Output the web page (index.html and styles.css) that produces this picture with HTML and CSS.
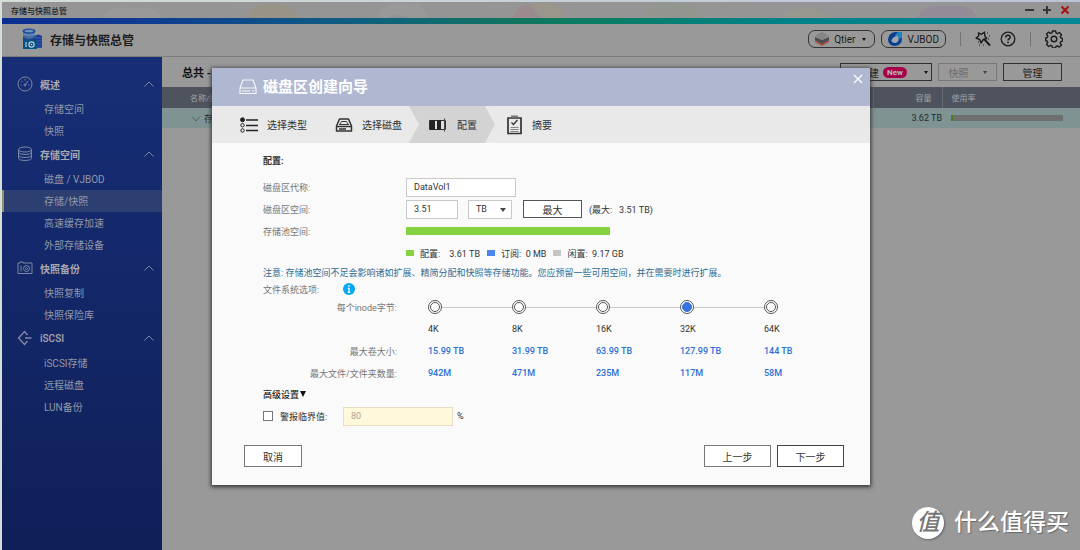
FILE: index.html
```html
<!DOCTYPE html>
<html lang="zh-CN">
<head>
<meta charset="utf-8">
<title>存储与快照总管</title>
<link rel="stylesheet" href="styles.css">
</head>
<body>
<div class="window">
  <div class="titlebar">
    <span class="titlebar-name">存储与快照总管</span>
    <svg class="deco" viewBox="0 0 1078 16" preserveAspectRatio="none" aria-hidden="true">
      <path d="M245 16q6-13 16-14h17q13 1 18 14z" fill="#9c927f"/>
      <path d="M101 16q4-9 14-10h30q11 1 14 10z" fill="#9d9d9d"/>
      <path d="M376 16q4-13 15-14h20q12 1 15 14" fill="#9d9d9d"/>
      <path d="M385 16q11-7 22 0" fill="#8e949b"/>
      <path d="M510 16q5-13 18-14l11 14z" fill="#a08688"/>
      <path d="M530 2l20-1q10 4 14 15h-23z" fill="#a09786"/>
      <path d="M643 16q5-13 15-14h25q12 1 17 14z" fill="#92978a"/>
      <path d="M778 16q10-10 25-10t20 10z" fill="#9a9b90"/>
      <path d="M915 16q6-11 16-12h28q12 1 16 12z" fill="#92879a"/>
    </svg>
    <div class="window-controls">
      <button type="button" aria-label="最小化"><svg width="10" height="10" viewBox="0 0 10 10"><path d="M1 5h9" stroke="#34363c" stroke-width="2"/></svg></button>
      <button type="button" aria-label="最大化"><svg width="10" height="10" viewBox="0 0 10 10"><path d="M1 5h8M5 1v8" stroke="#34363c" stroke-width="2"/></svg></button>
      <button type="button" aria-label="关闭窗口"><svg width="10" height="10" viewBox="0 0 10 10"><path d="M1.500 1.500l7 7M8.500 1.500l-7 7" stroke="#a51212" stroke-width="2"/></svg></button>
    </div>
  </div>
  <div class="strip"></div>
  <header class="app-header">
    <svg class="logo" width="22" height="22" viewBox="0 0 22 22" aria-hidden="true">
      <path d="M1 3v8h12V3z" fill="#466b9e"/><path d="M1 9q6 4 12 0v3H1z" fill="#193e8e"/>
      <ellipse cx="7" cy="3" rx="6.500" ry="2.500" fill="#1749a3"/><ellipse cx="7" cy="3" rx="4.500" ry="1.300" fill="#6f91b5"/>
      <path d="M1 6q6 3 12 0" stroke="#799abd" fill="none"/>
      <path d="M13 8q3-3 7 0v12h-7z" fill="#193b91"/><path d="M13 10h7M13 13h7M13 16h7M13 19h7" stroke="#3b63ad"/>
      <path d="M1 12h3v-1h4v1h7v9H1z" fill="#075384"/><path d="M4 14v5" stroke="#c0cbd1" stroke-width="1.200"/><circle cx="9.500" cy="16.500" r="2.600" fill="none" stroke="#c0cbd1" stroke-width="1.200"/><circle cx="9.500" cy="16.500" r=".8" fill="#c0cbd1"/>
    </svg>
    <h1>存储与快照总管</h1>
    <div class="header-tools">
      <button type="button" class="pill">
        <svg width="14" height="14" viewBox="0 0 14 14" aria-hidden="true"><path d="M0 8l7 3 7-3v2l-7 4-7-4z" fill="#a85345"/><path d="M0 5l7 3 7-3v3l-7 4-7-4z" fill="#4a4e52"/><path d="M0 4l7-4 7 4-7 4z" fill="#858585"/></svg>
        Qtier<span class="caret"></span>
      </button>
      <button type="button" class="pill">
        <svg width="14" height="14" viewBox="0 0 14 14" aria-hidden="true"><path d="M14 0v6q0 8-8 8-6-1-6-7 1-6 7-7z" fill="#063f91"/><path d="M14 0l-4 0-3 3 4 4 3-1z" fill="#1d83bb"/><path d="M9 3.500q4 5-1 7.500-6 0-4-4 1-2 5-3.500z" fill="#a0a6af"/></svg>
        VJBOD
      </button>
      <span class="divider"></span>
      <button type="button" class="icon-button" aria-label="工具"><svg width="16" height="16" viewBox="0 0 16 16" fill="none" stroke="#1d1d1d"><path d="M3.500 2l3 1.300L9.500 1l.3 4 2 2.500-3.500 1L6 12 4.800 8.500 1 7l2.700-2z" stroke-width="1.400" stroke-linejoin="round"/><path d="M9 8l6 6.500" stroke-width="2"/><path d="M12 2h1M14 5h1M13 8h1M3 11h1M4 14h1M8 14h1"/></svg></button>
      <button type="button" class="icon-button" aria-label="帮助"><svg width="16" height="16" viewBox="0 0 16 16" fill="none" stroke="#1d1d1d"><circle cx="8" cy="8" r="6.800" stroke-width="1.300"/><path d="M5.800 6.500Q5.800 4.300 8 4.300t2.200 2Q10.200 7.300 8.900 8 8 8.500 8 9.600M8 10.700v1.500" stroke-width="1.500"/></svg></button>
      <span class="divider"></span>
      <button type="button" class="icon-button" aria-label="设置"><svg width="18" height="18" viewBox="0 0 18 18" fill="none" stroke="#1d1d1d" stroke-width="1.400" stroke-linejoin="round"><path d="M7.400 1h3.200l.5 2.100 1.300.6 2-1.200 2.100 2.200-1.200 1.900.5 1.300 1.700.5v2.700l-1.700.5-.6 1.500 1.300 1.900-2.200 2.100-1.900-1.200-1.400.6-.4 1.500H7.500L7 15.900l-1.400-.6-2 1.200-2.100-2.200 1.200-1.900-.6-1.400L.7 10.700V8l1.500-.5.6-1.400-1.300-1.900 2.100-2.100 2 1.200L7 2.900z"/><circle cx="9" cy="9" r="2.800"/></svg></button>
    </div>
  </header>
  <div class="workspace">
    <nav class="sidebar">
      <section>
        <h2><svg width="16" height="16" viewBox="0 0 16 16"><circle cx="8" cy="8" r="7"/><path d="M8 9l3-4M3.500 9h1M4.500 5l1 1M8 3v1.500M11.500 9h1" /><circle cx="8" cy="9" r="1"/></svg>概述<svg class="chev" width="10" height="6" viewBox="0 0 10 6"><path d="M.5 5.500L5 1l4.500 4.500"/></svg></h2>
        <a href="#">存储空间</a><a href="#">快照</a>
      </section>
      <section>
        <h2><svg width="16" height="16" viewBox="0 0 16 16"><ellipse cx="8" cy="3.500" rx="6.500" ry="2.500"/><path d="M1.500 3.500v9q1 2 6.500 2t6.500-2v-9M1.500 6.500q1 2 6.500 2t6.500-2M1.500 9.500q1 2 6.500 2t6.500-2"/></svg>存储空间<svg class="chev" width="10" height="6" viewBox="0 0 10 6"><path d="M.5 5.500L5 1l4.500 4.500"/></svg></h2>
        <a href="#">磁盘 / VJBOD</a><a href="#" class="active" aria-current="page">存储/快照</a><a href="#">高速缓存加速</a><a href="#">外部存储设备</a>
      </section>
      <section>
        <h2><svg width="16" height="16" viewBox="0 0 16 16"><path d="M1 3h2V2h3v1h9v10.500H1zM4 5.500v6"/><circle cx="9.500" cy="8.500" r="3"/><circle cx="9.500" cy="8.500" r="1"/></svg>快照备份<svg class="chev" width="10" height="6" viewBox="0 0 10 6"><path d="M.5 5.500L5 1l4.500 4.500"/></svg></h2>
        <a href="#">快照复制</a><a href="#">快照保险库</a>
      </section>
      <section>
        <h2 class="latin"><svg width="16" height="16" viewBox="0 0 16 16"><path d="M10.500 5L7.500 1.500 1.500 8l6 6.500 3-3.500M8 8h6.500" stroke-width="1.400"/></svg>iSCSI<svg class="chev" width="10" height="6" viewBox="0 0 10 6"><path d="M.5 5.500L5 1l4.500 4.500"/></svg></h2>
        <a href="#">iSCSI存储</a><a href="#">远程磁盘</a><a href="#">LUN备份</a>
      </section>
    </nav>
    <main class="content">
      <div class="toolbar">
        <strong>总共 -</strong>
        <div class="toolbar-actions">
          <button type="button" class="dim-button create">创建<span class="badge">New</span><span class="caret"></span></button>
          <button type="button" class="dim-button snap" disabled>快照<span class="caret"></span></button>
          <button type="button" class="dim-button manage">管理</button>
        </div>
      </div>
      <table class="pool-table">
        <colgroup><col><col class="capacity-col"><col class="usage-col"></colgroup>
        <thead><tr><th class="name">名称/别名</th><th class="capacity">容量</th><th class="usage">使用率</th></tr></thead>
        <tbody><tr>
          <td class="pool"><svg width="10" height="6" viewBox="0 0 10 6" aria-hidden="true"><path d="M1 .5L5 5 9 .5" fill="none" stroke="#4d6363"/></svg>存储池 1</td>
          <td class="capacity">3.62 TB</td>
          <td class="usage"><div class="usage-bar"><span style="width:2%"></span></div></td>
        </tr></tbody>
      </table>
    </main>
  </div>

  <div class="overlay">
    <div class="dialog" role="dialog" aria-labelledby="dialog-title">
      <header class="dialog-header">
        <svg width="18" height="16" viewBox="0 0 18 16" fill="none" stroke="#f3f5fa" stroke-width="1.200" aria-hidden="true"><path d="M4 1h10l3 8v5.500H1V9zM1 9h16M3 12h8M13 12h2"/></svg>
        <h2 id="dialog-title">磁盘区创建向导</h2>
        <button type="button" class="close" aria-label="关闭"><svg width="10" height="10" viewBox="0 0 10 10"><path d="M1 1l8 8M9 1L1 9" stroke="#fff" stroke-width="1.200"/></svg></button>
      </header>
      <ol class="steps">
        <li><svg width="18" height="16" viewBox="0 0 18 16" fill="none" stroke="#222" aria-hidden="true"><circle cx="2.500" cy="2.800" r="2" fill="#222"/><circle cx="2.500" cy="8.200" r="1.700"/><circle cx="2.500" cy="13.500" r="1.700"/><path d="M6 3h12M6 8.500h12M6 13.500h12" stroke-width="1.600"/></svg>选择类型</li>
        <li><svg width="18" height="16" viewBox="0 0 18 16" fill="none" stroke="#333" stroke-width="1.500" stroke-linejoin="round" aria-hidden="true"><path d="M4.500 2h9l3 7v5h-15V9zM1.500 9.500h15M4 12h7"/><path d="M4.500 7.500l2-3h5l2 3z" stroke-width="1"/></svg>选择磁盘</li>
        <li class="current" aria-current="step"><svg width="19" height="16" viewBox="0 0 19 16" aria-hidden="true"><path d="M.5 3.500h16v9H.5z" fill="#ddd" stroke="#333"/><path d="M1 3h5v10H1zM8 3h4v10H8z" fill="#222"/><path d="M15.500 1.500v13" stroke="#444"/></svg>配置</li>
        <li><svg width="17" height="20" viewBox="0 0 17 20" fill="none" stroke="#333" aria-hidden="true"><path d="M2 3h13v15.500H2z" stroke-width="1.700"/><path d="M5 1.500h7" stroke-width="2" stroke="#777"/><path d="M5.500 7.500l2 2 4-4.500" stroke-width="1.300"/><path d="M4.500 12.500h8M4.500 14.500h8M4.500 16.500h8" stroke="#888"/></svg>摘要</li>
      </ol>
      <form class="dialog-body">
        <h3>配置:</h3>
        <div class="row">
          <label for="vol-name">磁盘区代称:</label>
          <input id="vol-name" class="field wide" type="text" value="DataVol1">
        </div>
        <div class="row">
          <label for="vol-size">磁盘区空间:</label>
          <input id="vol-size" class="field short" type="text" value="3.51">
          <span class="select-wrap"><select class="field" aria-label="单位"><option>TB</option><option>GB</option></select><span class="caret"></span></span>
          <button type="button" class="button max">最大</button>
          <span>(最大:&ensp;&nbsp;3.51 TB)</span>
        </div>
        <div class="row">
          <span class="label">存储池空间:</span>
          <div class="space-bar"></div>
        </div>
        <div class="row legend">
          <span class="label"></span>
          <span class="key"><i class="green"></i>配置:&ensp;&nbsp;&nbsp;3.61 TB</span>
          <span class="key"><i class="blue"></i>订阅: &nbsp;0 MB</span>
          <span class="key"><i class="gray"></i>闲置: &nbsp;9.17 GB</span>
        </div>
        <p class="notice">注意: 存储池空间不足会影响诸如扩展、精简分配和快照等存储功能。您应预留一些可用空间，并在需要时进行扩展。</p>
        <div class="fs-title">文件系统选项:
          <svg width="12" height="12" viewBox="0 0 12 12" aria-hidden="true"><circle cx="6" cy="6" r="6" fill="#00a8f5"/><path d="M6 2v1.700M6 5v4.500M5 5.200h1M4.700 9.300h2.600" stroke="#fff" stroke-width="1.300"/></svg>
        </div>
        <table class="inode">
          <colgroup><col class="inode-label"><col><col><col><col><col></colgroup>
          <tr>
            <th scope="row">每个inode字节:</th>
            <td><div class="stop"><input type="radio" name="inode" id="k4"></div></td>
            <td><div class="stop"><input type="radio" name="inode" id="k8"></div></td>
            <td><div class="stop"><input type="radio" name="inode" id="k16"></div></td>
            <td><div class="stop"><input type="radio" name="inode" id="k32" checked></div></td>
            <td><div class="stop"><input type="radio" name="inode" id="k64"></div></td>
          </tr>
          <tr><th></th><td><label for="k4">4K</label></td><td><label for="k8">8K</label></td><td><label for="k16">16K</label></td><td><label for="k32">32K</label></td><td><label for="k64">64K</label></td></tr>
          <tr class="values"><th scope="row">最大卷大小:</th><td>15.99 TB</td><td>31.99 TB</td><td>63.99 TB</td><td>127.99 TB</td><td>144 TB</td></tr>
          <tr class="values"><th scope="row">最大文件/文件夹数量:</th><td>942M</td><td>471M</td><td>235M</td><td>117M</td><td>58M</td></tr>
        </table>
        <button type="button" class="advanced">高级设置<span class="caret"></span></button>
        <div class="alert-row">
          <input type="checkbox" id="alert">
          <label for="alert">警报临界值:</label>
          <input class="field threshold" type="text" value="80" aria-label="警报临界值百分比" disabled>
          <span>%</span>
        </div>
        <footer>
          <button type="button" class="button cancel">取消</button>
          <button type="button" class="button nav-button">上一步</button>
          <button type="button" class="button nav-button next">下一步</button>
        </footer>
      </form>
    </div>
  </div>
  <div class="watermark"><span class="mark">值</span>什么值得买</div>
</div>
</body>
</html>
```
FILE: styles.css
```css
* { box-sizing: border-box; }
body {
  margin: 0;
  font-family: Roboto, "Noto Sans CJK SC", sans-serif;
  font-size: 9px;
  color: #333;
  background: linear-gradient(90deg, #d5ded8, #b9c3d6);
}
button, input, select { font: inherit; color: inherit; }
button { cursor: pointer; padding: 0; border: 0; background: none; }
button:disabled { cursor: default; }
h1, h2, h3, p, ol { margin: 0; padding: 0; }
svg { flex: none; display: block; }

.window {
  position: relative;
  display: flex;
  flex-direction: column;
  min-height: calc(100vh - 2px);
  margin: 2px 0 0 2px;
  background: #999;
}
.caret {
  flex: none;
  width: 0;
  height: 0;
  border: 2px solid transparent;
  border-top: 3px solid #111;
  border-bottom: 0;
}

/* Window chrome */
.titlebar {
  position: relative;
  display: flex;
  align-items: center;
  justify-content: space-between;
  height: 16px;
  padding: 0 10px 0 9px;
  background: #959595;
}
.titlebar-name { position: relative; z-index: 1; font-size: 8px; font-weight: 500; color: #1a1a1a; }
.deco { position: absolute; inset: 0; width: 100%; height: 100%; opacity: 0.6; }
.window-controls { position: relative; display: flex; gap: 8px; }
.strip { height: 6px; background: linear-gradient(90deg, #0c2d91, #0f3b91 13%, #0e5a85 30%, #10765f 48%, #0b7d64 55%, #008189 72%, #008795); }

/* Application header */
.app-header {
  display: flex;
  align-items: center;
  gap: 6px;
  height: 33px;
  padding: 0 17px 2px 20px;
  border-bottom: 1px solid #7d7d7d;
}
h1 { font-size: 12px; font-weight: 700; color: #1c1c1c; }
.header-tools { display: flex; align-items: center; gap: 6px; margin-left: auto; }
.pill {
  display: flex;
  align-items: center;
  gap: 5px;
  height: 18px;
  padding: 0 6px;
  border: 1px solid #333;
  border-radius: 7px;
  font-size: 10px;
  color: #1a1a1a;
}
.pill .caret { margin: 0 2px; }
.divider { width: 1px; height: 14px; margin: 0 8px; background: #737373; }
.icon-button + .icon-button { margin-left: 3px; }

.workspace { display: flex; flex: 1; }

/* Navigation */
.sidebar {
  flex: none;
  width: 160px;
  padding-top: 15px;
  background: linear-gradient(#172e76, #14296c 35%, #101f58);
  color: #9298a8;
  font-size: 10px;
}
.sidebar h2 {
  display: flex;
  align-items: center;
  gap: 7px;
  height: 26px;
  padding: 0 8px 2px 15px;
  font-size: 10px;
  font-weight: 700;
  color: #a8aaaf;
}
.sidebar .latin { font-weight: 500; }
.sidebar svg { fill: none; stroke: #7f899f; stroke-width: 1; }
.sidebar .chev { margin-left: auto; stroke: #7986a7; }
.sidebar a {
  display: block;
  height: 22px;
  padding-left: 42px;
  line-height: 24px;
  color: inherit;
  text-decoration: none;
}
.sidebar .active { padding-left: 40px; border-left: 2px solid #8f9374; background: #2d3e70; }

/* Pool list */
.content { flex: 1; min-width: 0; }
.toolbar { display: flex; align-items: center; justify-content: space-between; height: 30px; padding: 0 18px 0 20px; }
.toolbar strong { font-size: 11px; color: #111; }
.toolbar-actions { display: flex; gap: 6px; }
.dim-button {
  display: flex;
  align-items: center;
  justify-content: center;
  width: 59px;
  height: 18px;
  border: 1px solid #303030;
  font-size: 10px;
  color: #1c1c1c;
}
.create { width: 92px; justify-content: flex-start; padding-left: 18px; }
.create .caret { margin-left: 17px; }
.snap { border-color: #777; color: #6b6b6b; }
.snap .caret { margin-left: 14px; border-top-color: #444; }
.badge { margin-left: 4px; padding: 0 4px; border-radius: 6px; background: #a6004a; color: #bbb; font-size: 8px; font-weight: 700; line-height: 11px; }
.pool-table { width: 100%; border-collapse: collapse; table-layout: fixed; color: #1f2a2a; }
.capacity-col { width: 69px; }
.usage-col { width: 138px; }
.pool-table th { height: 21px; padding: 0; background: #4e535e; color: #a0a3a8; font-weight: 400; font-size: 8px; text-align: left; }
.pool-table th + th { border-left: 1px solid #686c75; }
.pool-table td { height: 20px; padding: 0; background: #7f9492; }
.pool-table .name { padding-left: 28px; }
.pool-table .capacity { padding-right: 10px; text-align: right; }
.pool-table td.capacity { padding-right: 0; }
.pool-table .usage { padding: 0 17px 0 9px; }
.pool svg { display: inline-block; margin: 0 3px 0 29px; }
.usage-bar { height: 6px; background: #6f6f6f; }
.usage-bar span { display: block; height: 100%; background: #3f801b; }

/* Wizard */
.overlay { position: absolute; inset: 0; display: flex; justify-content: center; align-items: flex-start; padding-top: 66px; }
.dialog { width: 100%; max-width: 658px; background: #fafafa; box-shadow: 0 1px 4px 1px #333; }
.dialog-header { display: flex; align-items: center; gap: 6px; height: 38px; padding: 0 7px 0 27px; background: #b0b7d1; color: #fff; }
.dialog-header h2 { font-size: 15px; line-height: 20px; }
.close { align-self: flex-start; margin: 6px 0 0 auto; }
.steps { display: flex; height: 37px; background: #e9e9e9; font-size: 10px; list-style: none; }
.steps li { display: flex; align-items: center; gap: 9px; padding-left: 28px; }
.steps .current {
  margin-left: 7px;
  padding: 0 18px 0 20px;
  background: #d3d3d3;
  clip-path: polygon(0 0, calc(100% - 10px) 0, 100% 50%, calc(100% - 10px) 100%, 0 100%, 10px 50%);
}
.steps .current + li { padding-left: 11px; }

.dialog-body { padding: 9px 26px 18px 51px; }
h3 { height: 24px; font-size: 9px; font-weight: 700; line-height: 18px; }
.row { display: flex; align-items: center; height: 22px; }
.row > label, .row > .label { flex: none; width: 143px; color: #777; }
.field { height: 19px; padding: 0 7px; border: 1px solid #c9c9c9; border-radius: 0; background: #fff; color: #333; }
.wide, .threshold { width: 110px; }
.short { width: 52px; }
.select-wrap { position: relative; display: flex; margin: 0 11px 0 10px; }
.select-wrap select { width: 44px; appearance: none; }
.select-wrap .caret { position: absolute; top: 8px; right: 6px; border-width: 4px 3px 0; border-top-color: #444; pointer-events: none; }
.button { height: 22px; border: 1px solid #777; background: #fff; font-size: 10px; }
.max { width: 59px; height: 18px; margin-right: 7px; border-color: #555; }
.space-bar { flex: none; width: 204px; height: 8px; background: #86d140; }
.legend .key { display: flex; align-items: center; margin-right: 7px; white-space: nowrap; }
.key i { width: 8px; height: 6px; margin-right: 6px; }
.green { background: #86d140; }
.blue { background: #4b85f0; }
.gray { background: #c6c6c6; }
.notice { color: #316b91; line-height: 18px; }
.fs-title { display: flex; align-items: center; gap: 24px; height: 14px; color: #777; }
.inode { width: 585px; border-collapse: collapse; table-layout: fixed; }
.inode-label { width: 165px; }
.inode th { height: 22px; padding: 0 31px 0 0; color: #777; font-weight: 400; text-align: right; white-space: nowrap; }
.inode td { height: 22px; padding: 0; white-space: nowrap; }
.stop { display: flex; align-items: center; }
.stop::after { content: ""; flex: 1; height: 1px; background: #c9c9c9; }
td:last-child .stop::after { display: none; }
.stop input {
  flex: none;
  display: grid;
  place-items: center;
  appearance: none;
  width: 14px;
  height: 14px;
  margin: 0;
  border: 1px solid #555;
  border-radius: 50%;
  background: #fff;
}
.stop input::before { content: ""; width: 8px; height: 8px; border: 1px solid #555; border-radius: 50%; }
.stop input:checked::before { border-color: #3474dc; background: #3474dc; }
.values td { color: #2c6fd6; font-weight: 500; }
.advanced { display: flex; align-items: center; height: 20px; gap: 1px; font-weight: 500; color: #222; }
.advanced .caret { border-width: 6px 3px 0; }
.alert-row { display: flex; align-items: center; height: 24px; }
.alert-row input[type="checkbox"] { appearance: none; width: 10px; height: 10px; margin: 0 7px 0 0; border: 1px solid #777; background: #fff; }
.alert-row label { width: 63px; }
.threshold { margin-right: 4px; border-color: #e7dcc4; background: #fff8da; color: #aaa695; }
footer { display: flex; gap: 6px; margin: 17px 0 0 -19px; }
.cancel { width: 58px; margin-right: auto; }
.nav-button { width: 67px; }
.next { border-color: #444; }

.watermark {
  position: absolute;
  right: 11px;
  bottom: 11px;
  display: flex;
  align-items: center;
  gap: 10px;
  color: #fff;
  font-size: 23px;
  font-weight: 500;
  line-height: 32px;
  text-shadow: 1px 1px 1px #666;
}
.mark { width: 32px; border-radius: 50%; background: #fff; color: #777; text-align: center; font-style: italic; text-shadow: none; box-shadow: 1px 1px 2px #666; }
```
